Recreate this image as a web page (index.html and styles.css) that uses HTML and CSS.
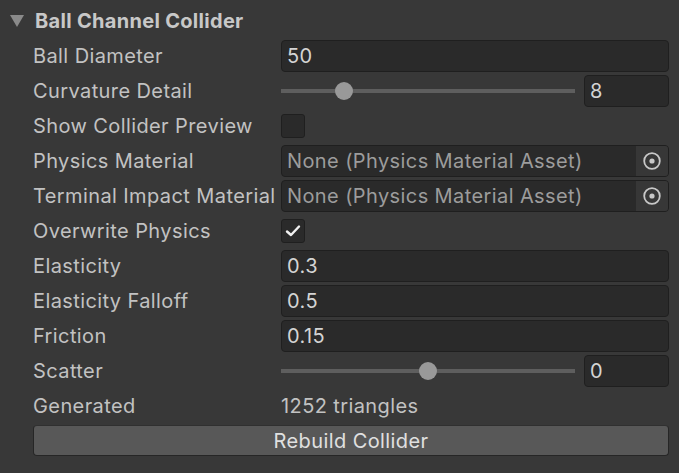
FILE: index.html
```html
<!DOCTYPE html>
<html>
<head>
<meta charset="utf-8">
<link rel="stylesheet" href="styles.css">
</head>
<body>
<div class="panel">
  <div class="header">
    <span class="tri"></span>
    <span class="title">Ball Channel Collider</span>
  </div>
  <div class="rows">
    <div class="label">Ball Diameter</div>
    <div class="cell"><div class="field">50</div></div>

    <div class="label">Curvature Detail</div>
    <div class="cell slider-cell">
      <div class="track"><span class="thumb" style="left: 21.4%"></span></div>
      <div class="field num">8</div>
    </div>

    <div class="label">Show Collider Preview</div>
    <div class="cell"><div class="check"></div></div>

    <div class="label">Physics Material</div>
    <div class="cell"><div class="field obj"><span class="objtext">None (Physics Material Asset)</span><span class="picker"><svg width="20" height="20" viewBox="0 0 20 20"><circle cx="10" cy="10" r="7.8" fill="none" stroke="#c8c8c8" stroke-width="1.8"/><circle cx="10" cy="10" r="2.6" fill="#c8c8c8"/></svg></span></div></div>

    <div class="label">Terminal Impact Material</div>
    <div class="cell"><div class="field obj"><span class="objtext">None (Physics Material Asset)</span><span class="picker"><svg width="20" height="20" viewBox="0 0 20 20"><circle cx="10" cy="10" r="7.8" fill="none" stroke="#c8c8c8" stroke-width="1.8"/><circle cx="10" cy="10" r="2.6" fill="#c8c8c8"/></svg></span></div></div>

    <div class="label">Overwrite Physics</div>
    <div class="cell"><div class="check"><svg width="16" height="14" viewBox="0 0 16 14"><path d="M2 7.5 L6 11 L14 2.5" fill="none" stroke="#f0f0f0" stroke-width="2.4" stroke-linecap="round" stroke-linejoin="round"/></svg></div></div>

    <div class="label">Elasticity</div>
    <div class="cell"><div class="field">0.3</div></div>

    <div class="label">Elasticity Falloff</div>
    <div class="cell"><div class="field">0.5</div></div>

    <div class="label">Friction</div>
    <div class="cell"><div class="field">0.15</div></div>

    <div class="label">Scatter</div>
    <div class="cell slider-cell">
      <div class="track"><span class="thumb" style="left: 50%"></span></div>
      <div class="field num">0</div>
    </div>

    <div class="label">Generated</div>
    <div class="cell"><div class="plain">1252 triangles</div></div>
  </div>
  <div class="button">Rebuild Collider</div>
</div>
</body>
</html>
```
FILE: styles.css
```css
html, body {
  margin: 0;
  padding: 0;
  background: #383838;
  width: 679px;
  height: 473px;
  overflow: hidden;
}
.panel {
  font-family: Inter, "Noto Sans", sans-serif;
  font-size: 20px;
  letter-spacing: 0.4px;
  color: #c2c2c2;
  padding: 0 10px 0 33px;
}
.header {
  height: 34px;
  padding-top: 4px;
  display: flex;
  align-items: center;
  margin-left: -23px;
}
.tri {
  width: 0;
  height: 0;
  border-left: 7px solid transparent;
  border-right: 7px solid transparent;
  border-top: 12px solid #8a8a8a;
  margin-right: 11px;
  margin-top: -1px;
}
.title {
  font-weight: 700;
  letter-spacing: 0.3px;
  color: #c8c8c8;
}
.rows {
  display: grid;
  grid-template-columns: 248px 1fr;
  grid-auto-rows: 35px;
}
.label {
  display: flex;
  align-items: center;
  white-space: nowrap;
  overflow: visible;
}
.cell {
  display: flex;
  align-items: center;
}
.field {
  flex: 1;
  box-sizing: border-box;
  height: 32px;
  background: #2a2a2a;
  border: 1px solid #1f1f1f;
  border-radius: 4px;
  color: #d4d4d4;
  display: flex;
  align-items: center;
  padding-left: 5px;
}
.field.num {
  flex: 0 0 85px;
}
.slider-cell {
  gap: 9px;
}
.track {
  flex: 1;
  height: 4px;
  background: #5e5e5e;
  position: relative;
}
.thumb {
  position: absolute;
  top: 50%;
  width: 18px;
  height: 18px;
  margin-left: -9px;
  margin-top: -9px;
  border-radius: 50%;
  background: #999999;
}
.check {
  box-sizing: border-box;
  width: 24px;
  height: 24px;
  background: #2a2a2a;
  border: 1px solid #1f1f1f;
  border-radius: 3px;
  display: flex;
  align-items: center;
  justify-content: center;
}
.obj {
  padding-right: 0;
  overflow: hidden;
}
.objtext {
  flex: 1;
  color: #9c9c9c;
  white-space: nowrap;
}
.picker {
  width: 32px;
  align-self: stretch;
  background: #373737;
  display: flex;
  align-items: center;
  justify-content: center;
}
.plain {
  color: #c2c2c2;
}
.button {
  box-sizing: border-box;
  margin-top: 2px;
  height: 31px;
  background: #585858;
  border: 1px solid #262626;
  border-top-color: #303030;
  border-radius: 4px;
  color: #e0e0e0;
  display: flex;
  align-items: center;
  justify-content: center;
}
```
